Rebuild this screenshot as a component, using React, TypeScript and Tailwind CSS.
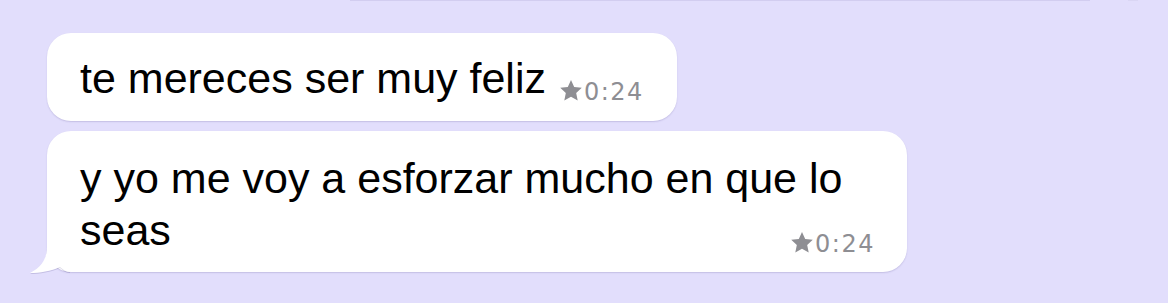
import React from "react";

function Star() {
  return (
    <svg width="22" height="21" viewBox="0 0 20 19" className="mb-[3px] mr-[2px] shrink-0" fill="#8e8e93">
      <polygon points="10,0 12.9,6.3 19.8,7.1 14.7,11.8 16.1,18.7 10,15.2 3.9,18.7 5.3,11.8 0.2,7.1 7.1,6.3" />
    </svg>
  );
}

function Stamp({ className = "" }: { className?: string }) {
  return (
    <span
      className={
        "flex shrink-0 items-end text-[24px] leading-[24px] tracking-[1.5px] text-[#8e8e93] " + className
      }
      style={{ fontFamily: '"DejaVu Sans", sans-serif' }}
    >
      <Star />
      <span>0:24</span>
    </span>
  );
}

export default function App() {
  return (
    <div
      className="h-[303px] w-[1168px] overflow-hidden bg-[#e2defc]"
      style={{ fontFamily: '"Liberation Sans", Arial, sans-serif' }}
    >
      <div className="flex h-px">
        <div className="ml-[350px] w-[740px] bg-[#d2cdf0]" />
        <div className="ml-[38px] w-[10px] bg-[#dad6f4]" />
      </div>
      <div className="flex flex-col items-start gap-[10px] pl-[47px] pt-[32px]">
        <div className="flex items-end rounded-[24px] bg-white pb-[17px] pl-[33px] pr-[33px] pt-[19px] shadow-[0_1px_1.5px_rgba(60,50,120,0.18)]">
          <span className="text-[43px] leading-[52px] text-black">te mereces ser muy feliz</span>
          <Stamp className="ml-[14px]" />
        </div>
        <div className="relative w-[860px] rounded-[24px] bg-white pb-[16px] pl-[33px] pr-[32px] pt-[21px] shadow-[0_1px_1.5px_rgba(60,50,120,0.18)]">
          <svg
            width="40"
            height="40"
            viewBox="0 0 40 40"
            className="absolute bottom-[-1px] left-[-17px]"
            style={{ filter: "drop-shadow(0 1px 0.75px rgba(60,50,120,0.18))" }}
          >
            <path d="M17 0 L17 14 C17 27 10 35 0 40 C10 40 21 38 30 34 C33 37 37 39 40 39 L40 0 Z" fill="#ffffff" />
          </svg>
          <div className="relative text-[43px] leading-[52px] text-black">
            <div>y yo me voy a esforzar mucho en que lo</div>
            <div className="flex items-end justify-between">
              <span>seas</span>
              <Stamp />
            </div>
          </div>
        </div>
      </div>
    </div>
  );
}
